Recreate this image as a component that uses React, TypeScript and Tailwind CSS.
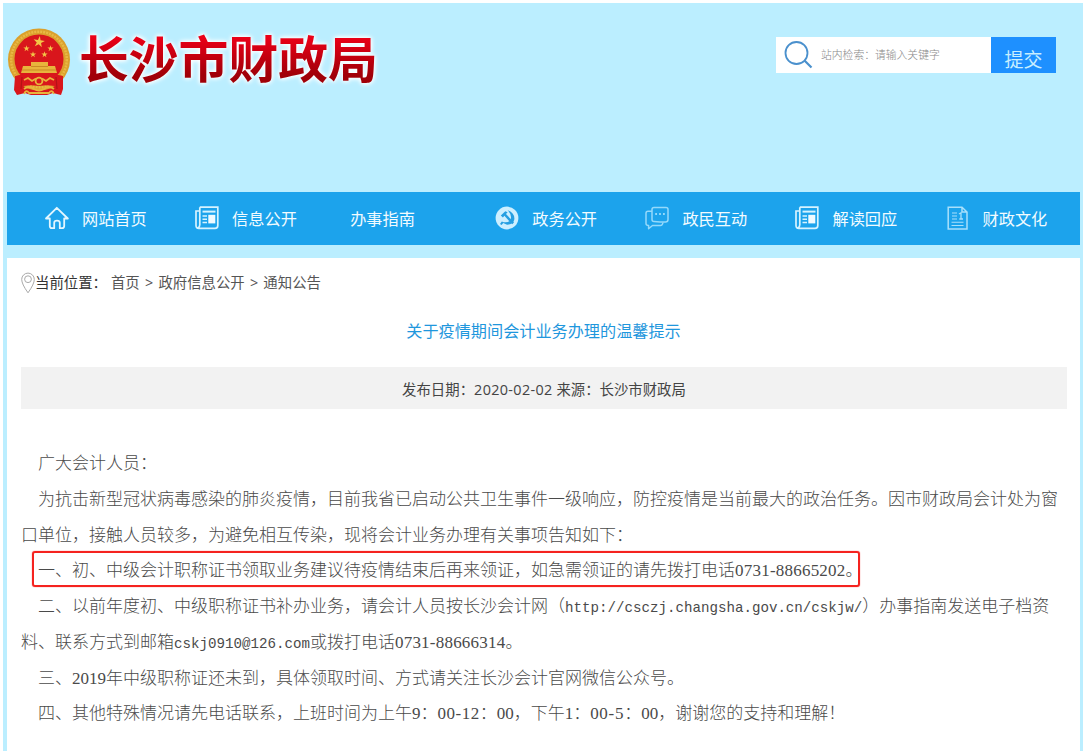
import React from "react";

interface NavItem {
    name: string;
    icon?: React.ComponentType;
}

const HomeIcon = () => (
    <svg width="24" height="24" viewBox="0 0 24 24" fill="none" stroke="#e2f6ff" strokeWidth="1.8" strokeLinejoin="round">
        <path d="M1 12.5 L11.8 1.8 L22.8 12.5 H19.2 V20 Q19.2 22.2 17 22.2 H14.8 V16.8 Q14.8 14.6 12 14.6 Q9.2 14.6 9.2 16.8 V22.2 H7 Q4.8 22.2 4.8 20 V12.5 Z" />
    </svg>
);

const NewsIcon = () => (
    <svg width="24" height="24" viewBox="0 0 24 24" fill="none" stroke="#d5f3ff" strokeWidth="1.7">
        <path d="M4.8 1.2 H22.8 V19.5 Q22.8 22.4 20 22.4 H3.8 Q1 22.4 1 19.5 V5 H4.8 M4.8 1.2 V18.8 Q4.8 21 3 21.8" />
        <path d="M7.5 5.6 H20.5" strokeWidth="2" />
        <path d="M7.5 10 H12 M7.5 13.2 H12 M7.5 16.4 H12" strokeWidth="1.5" />
        <rect x="13.3" y="8.8" width="7" height="8.6" fill="#effaff" stroke="none" />
    </svg>
);

const PartyIcon = () => (
    <svg width="24" height="24" viewBox="0 0 24 24" fill="none">
        <circle cx="12" cy="12" r="11.4" fill="#cdefff" />
        <path d="M12.5 4 Q20.5 7.5 19.2 14 Q17.5 19 11.5 18.6 L8.2 17 L6.6 19 L5 18 L6.8 15.4 Q11.5 17.5 15 14.7 Q18 10 12.5 4 Z" fill="#269fe2" />
        <path d="M5.8 9.6 L10.3 5.2 L12.6 6.2 L11 8.1 L19 16.6 L17.2 18.3 L9.4 9.8 L7.9 11.4 Z" fill="#269fe2" />
    </svg>
);

const ChatIcon = () => (
    <svg width="24" height="24" viewBox="0 0 24 24" fill="none" stroke="#94d9fb" strokeWidth="1.5" strokeLinejoin="round">
        <path d="M9 1.5 H21 Q23 1.5 23 3.5 V13.5 Q23 16 20.5 16 H15 L9 15.6 Q7 15.6 7 13.6 V3.5 Q7 1.5 9 1.5 Z" />
        <path d="M7 5.2 H3 Q1 5.2 1 7.2 V17.5 Q1 19.5 3.6 19.5 V22.8 L7.5 19.5 H15.5 Q17.5 19.5 18 16.5" />
        <path d="M10.2 8 H12 M14.1 8 H15.9 M18 8 H19.8" strokeWidth="1.8" />
    </svg>
);

const DocIcon = () => (
    <svg width="24" height="24" viewBox="0 0 24 24" fill="none" stroke="#a8e0fb" strokeWidth="1.5">
        <path d="M2.2 1.2 H16 L21 6 V23 H2.2 Z M16 1.2 V6 H21" />
        <path d="M6 7 H11 M6 10 H11 M6 13 H11 M5.5 16.3 H17.5 M5.5 19.5 H17.5" strokeWidth="1.1" />
        <path d="M13 8 L15 6.8 V12.8 M13.3 13 H17" strokeWidth="1.3" />
    </svg>
);

const navItems: NavItem[] = [
    { name: "网站首页", icon: HomeIcon },
    { name: "信息公开", icon: NewsIcon },
    { name: "办事指南" },
    { name: "政务公开", icon: PartyIcon },
    { name: "政民互动", icon: ChatIcon },
    { name: "解读回应", icon: NewsIcon },
    { name: "财政文化", icon: DocIcon },
];

const STAR = "0,-1 0.22,-0.31 0.95,-0.31 0.36,0.12 0.59,0.81 0,0.38 -0.59,0.81 -0.36,0.12 -0.95,-0.31 -0.22,-0.31";

const Emblem = () => (
    <svg width="64" height="68" viewBox="0 0 64 68" className="shrink-0">
        <path d="M8 48 L56 48 L56 61 L54 67 L46 65 L40 67 H24 L18 65 L10 67 L7 62 Z" fill="#d9161c" />
        <ellipse cx="32" cy="31.5" rx="31" ry="31" fill="#dba02c" />
        <ellipse cx="32" cy="31.5" rx="27.8" ry="27.8" fill="none" stroke="#e9b944" strokeWidth="2.5" strokeDasharray="2 1" />
        <circle cx="32" cy="31" r="24.5" fill="#d9161c" />
        <g fill="#f3c647">
            <polygon points={STAR} transform="translate(32 14) rotate(8) scale(6)" />
            <polygon points={STAR} transform="translate(19.5 20.5) scale(3.3)" />
            <polygon points={STAR} transform="translate(43.5 20.5) scale(3.3)" />
            <polygon points={STAR} transform="translate(26 26.5) scale(3.3)" />
            <polygon points={STAR} transform="translate(37.5 26.5) scale(3.3)" />
        </g>
        <path d="M24 34 H41 V38 H48 L50 45 H14 L16 38 H24 Z" fill="#e8b43c" />
        <path d="M24 38.5 H41 M15 42 H49" stroke="#bd7a19" strokeWidth="0.7" />
        <path d="M8 48 Q20 45 32 48.5 Q44 45 56 48 L56 60 Q44 56 32 58 Q20 56 8 60 Z" fill="#d9161c" />
        <g fill="none" stroke="#e8b43c" strokeWidth="1.8">
            <path d="M17 52 L21 50 L25 53 L29 50.5 M35 50.5 L39 53 L43 50 L47 52" />
            <circle cx="32" cy="53" r="3.4" />
            <path d="M17 61 Q22 57 27 61 Q32 64 37 61 Q42 57 47 61 M17 66 Q19 61 22 65 H42 Q45 61 47 66" />
        </g>
        <path d="M15 49 L14 61 M49 49 L50 61" stroke="#b51216" strokeWidth="1.2" />
    </svg>
);

const PinIcon = () => (
    <svg width="14" height="22" viewBox="0 0 14 22" fill="none" stroke="#aaa" strokeWidth="1" className="shrink-0">
        <path d="M7 20.8 Q0.7 12 0.7 7.4 A6.3 6.3 0 0 1 13.3 7.4 Q13.3 12 7 20.8 Z" />
        <circle cx="7" cy="7.2" r="3.4" />
    </svg>
);

export default function App() {
    return (
        <div className="h-[754px] w-[1086px] overflow-hidden bg-white p-[3px] font-['Open_Sans','Noto_Sans_CJK_SC',sans-serif]">
            <div className="flex h-[748px] flex-col bg-[#bbeeff] pr-[3px] pl-1">
                {/* Header */}
                <header className="flex h-[189px] shrink-0 items-start justify-between pr-6">
                    <div className="flex items-start pt-[25px]">
                        <Emblem />
                        <div className="-mt-[4px] ml-[8px] [filter:drop-shadow(0_0_2px_#fff)_drop-shadow(0_0_2px_#fff)]">
                            <h1 className="bg-linear-to-b from-[#ec0018] from-20% to-[#a00008] to-80% bg-clip-text font-['Noto_Sans_CJK_SC',sans-serif] text-[49.8px] leading-[64px] font-bold whitespace-nowrap text-transparent">
                                长沙市财政局
                            </h1>
                        </div>
                    </div>
                    <div className="mt-[34px] flex h-9 font-['Noto_Sans_CJK_SC',sans-serif]">
                        <div className="flex w-[215px] items-center bg-white pl-2">
                            <svg width="30" height="30" viewBox="0 0 30 30" fill="none" stroke="#4a90cd" strokeWidth="1.8">
                                <circle cx="12.5" cy="13" r="11" />
                                <path d="M20.5 20.5 L27.5 27.5" strokeWidth="2.2" />
                            </svg>
                            <span className="mb-[2px] ml-[7px] text-[10.8px] font-light whitespace-nowrap text-[#888]">
                                站内检索：请输入关键字
                            </span>
                        </div>
                        <button className="w-[65px] bg-[#1e90ff] pt-[7px] text-[19px] leading-7 text-[#c8eeff]">
                            提交
                        </button>
                    </div>
                </header>

                {/* Navigation */}
                <nav className="flex h-[53px] shrink-0 items-center bg-[#1ca3ec] pl-[38px]">
                    {navItems.map((item) => {
                        const IconComponent = item.icon;
                        return (
                            <a
                                key={item.name}
                                className={`flex w-[150.1px] shrink-0 items-center gap-[13px] font-['Noto_Sans_CJK_SC',sans-serif] text-[16.2px] text-[#f2fbff] ${IconComponent ? "" : "pl-[5px]"}`}
                            >
                                {IconComponent && <IconComponent />}
                                <span className="mb-px whitespace-nowrap">{item.name}</span>
                            </a>
                        );
                    })}
                </nav>

                {/* Article */}
                <main className="mt-[13px] flex-1 bg-white px-[14px] pt-[13px]">
                    <div className="flex h-6 items-center text-[14.4px] text-[#555]">
                        <PinIcon />
                        <span className="text-[#333]">当前位置：</span>
                        <span className="ml-[4px] flex gap-[5.2px] whitespace-nowrap">
                            <span>首页</span>
                            <span>&gt;</span>
                            <span>政府信息公开</span>
                            <span>&gt;</span>
                            <span>通知公告</span>
                        </span>
                    </div>
                    <h2 className="mt-[24px] text-center text-[16.15px] leading-6 text-[#1f97dd]">
                        关于疫情期间会计业务办理的温馨提示
                    </h2>
                    <div className="mt-[24px] mr-[-1px] h-[42px] bg-[#f2f2f2] text-center text-[14.4px] leading-[45px] text-[#444]">
                        发布日期：<span className="tracking-[0.35px]">2020-02-02</span> 来源：长沙市财政局
                    </div>

                    <div className="mt-[37px] font-['Liberation_Serif','Noto_Sans_CJK_SC',serif] text-[17px] leading-[35.75px] font-light whitespace-nowrap text-[#4a4a4a]">
                        <p className="indent-[17px]">广大会计人员：</p>
                        <p className="indent-[17px]">
                            为抗击新型冠状病毒感染的肺炎疫情，目前我省已启动公共卫生事件一级响应，防控疫情是当前最大的政治任务。因市财政局会计处为窗
                        </p>
                        <p>口单位，接触人员较多，为避免相互传染，现将会计业务办理有关事项告知如下：</p>
                        <div className="relative">
                            <p className="indent-[17px]">
                                一、初、中级会计职称证书领取业务建议待疫情结束后再来领证，如急需领证的请先拨打电话
                                <span className="tracking-[0.22px]">0731-88665202</span>。
                            </p>
                            {/* Red highlight frame */}
                            <div className="absolute top-[-2px] left-[11px] h-[36px] w-[828px] rounded-[3px] border-[2.5px] border-[#f5231f] shadow-[0_0_1px_#f5231f]" />
                        </div>
                        <p className="indent-[17px]">
                            二、以前年度初、中级职称证书补办业务，请会计人员按长沙会计网（
                            <span className="font-['Liberation_Mono',monospace] text-[14.17px] leading-none">
                                http://csczj.changsha.gov.cn/cskjw/
                            </span>
                            ）办事指南发送电子档资
                        </p>
                        <p>
                            料、联系方式到邮箱
                            <span className="font-['Liberation_Mono',monospace] text-[14.17px] leading-none">
                                cskj0910@126.com
                            </span>
                            或拨打电话
                            <span className="tracking-[0.22px]">0731-88666314</span>。
                        </p>
                        <p className="indent-[17px]">三、2019年中级职称证还未到，具体领取时间、方式请关注长沙会计官网微信公众号。</p>
                        <p className="indent-[17px]">
                            四、其他特殊情况请先电话联系，上班时间为上午9：
                            <span className="tracking-[0.5px]">00-12</span>：00，下午1：
                            <span className="tracking-[0.7px]">00-5</span>：00，谢谢您的支持和理解！
                        </p>
                    </div>
                </main>
            </div>
        </div>
    );
}
